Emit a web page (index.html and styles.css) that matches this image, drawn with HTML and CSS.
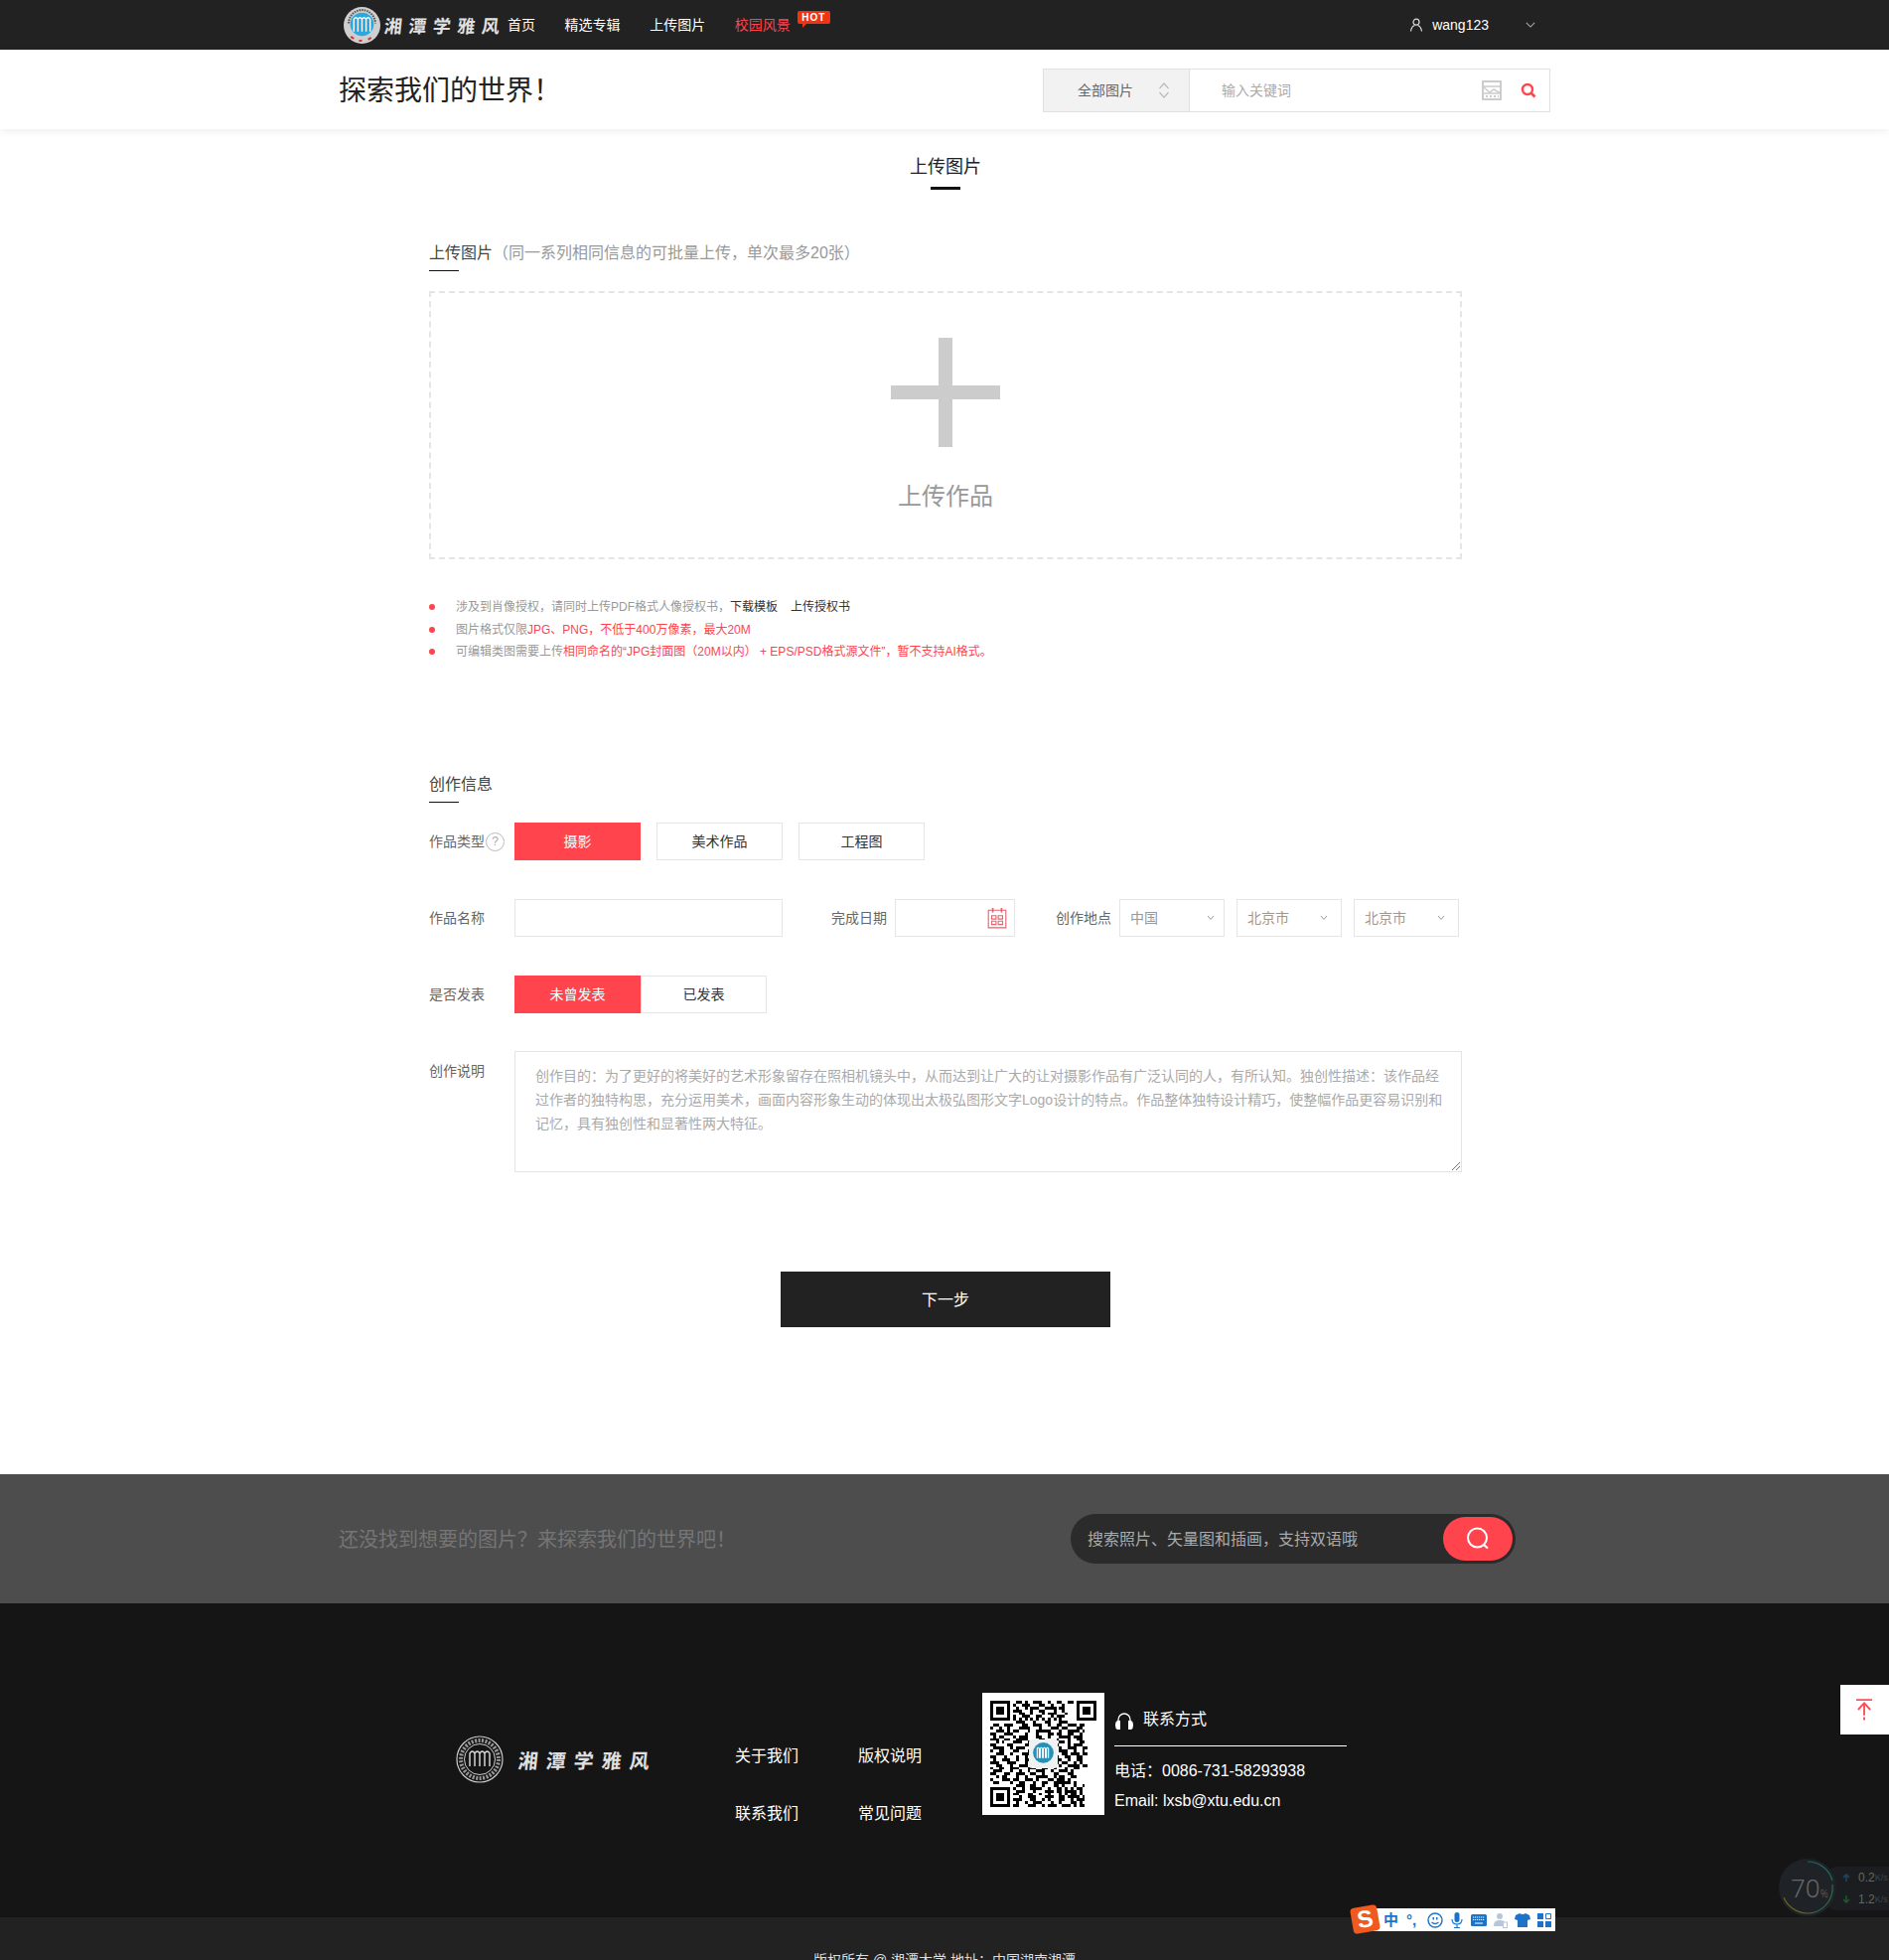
FILE: index.html
```html
<!DOCTYPE html>
<html lang="zh-CN">
<head>
<meta charset="utf-8">
<title>上传图片</title>
<link rel="stylesheet" href="styles.css">
</head>
<body>
<nav class="topbar">
  <div class="wrap topbar-in">
    <a class="brand">
      <svg class="badge" viewBox="0 0 36 36">
        <circle cx="18" cy="18" r="18" fill="#cfcfcf"/>
        <circle cx="18" cy="17" r="11.500" fill="#29a9e0"/>
        <path d="M10 24V12q2-3 4 0v12M14 24V12q2-3 4 0v12M18 24V12q2-3 4 0v12M22 24V12q2-3 4 0v12" fill="none" stroke="#fff" stroke-width="1.300"/>
        <path d="M7 29l3 2M15 33h3M24 32l3-2" stroke="#d33" stroke-width="2"/>
        <path d="M5 16a13 13 0 0 1 26 0" fill="none" stroke="#555" stroke-width="2" stroke-dasharray="1.500 1"/>
      </svg>
      <span class="brand-text">湘潭学雅风</span>
    </a>
    <ul class="menu">
      <li>首页</li>
      <li>精选专辑</li>
      <li>上传图片</li>
      <li class="menu-hot">校园风景
        <span class="hot">HOT</span>
      </li>
    </ul>
    <div class="user">
      <svg class="user-ico" viewBox="0 0 14 14"><circle cx="7" cy="4.200" r="3" fill="none" stroke="#ddd" stroke-width="1.200"/><path d="M1.500 13.500C2 10 4 8 5.500 7.500M12.500 13.500C12 10 10 8 8.500 7.500" fill="none" stroke="#ddd" stroke-width="1.200"/></svg>
      <span>wang123</span>
      <svg class="user-caret" viewBox="0 0 12 7"><path d="M1 1l5 5 5-5" fill="none" stroke="#aaa" stroke-width="1.300"/></svg>
    </div>
  </div>
</nav>

<header class="head">
  <div class="wrap head-in">
    <h1 class="slogan">探索我们的世界！</h1>
    <div class="search">
      <div class="search-type">
        <span class="lift">全部图片</span>
        <svg class="updown" viewBox="0 0 12 18"><path d="M1.500 7l4.500-5 4.500 5M1.500 11l4.500 5 4.500-5" fill="none" stroke="#bbb" stroke-width="1.200"/></svg>
      </div>
      <div class="search-input">
        <span class="ph lift">输入关键词</span>
        <svg class="pic-ico" viewBox="0 0 20 20"><path d="M1 1h18v18H1z" fill="none" stroke="#ccc" stroke-width="2"/><path d="M1 6h18M1 6l7 6 4-3 7 4M1 13h18" fill="none" stroke="#ccc" stroke-width="1.500"/><path d="M4 16h2m2 0h2m2 0h2m2 0h1" stroke="#ccc" stroke-width="2"/></svg>
        <svg class="find-ico" viewBox="0 0 16 16"><circle cx="7" cy="7" r="5" fill="none" stroke="#ff444d" stroke-width="2.400"/><path d="M10.500 10.500l4 4" stroke="#ff444d" stroke-width="2.600"/></svg>
      </div>
    </div>
  </div>
</header>

<main class="main">
  <div class="tab">上传图片</div>

  <section class="form">
    <h2 class="sec-title"><span class="sec-name">上传图片</span><span class="sec-note">（同一系列相同信息的可批量上传，单次最多20张）</span></h2>
    <div class="drop">
      <div class="plus"></div>
      <div class="drop-text">上传作品</div>
    </div>
    <ul class="notes">
      <li>涉及到肖像授权，请同时上传PDF格式人像授权书，<span class="dark">下载模板</span><span class="dark gap">上传授权书</span></li>
      <li>图片格式仅限<span class="red">JPG、PNG，不低于400万像素，最大20M</span></li>
      <li>可编辑类图需要上传<span class="red">相同命名的“JPG封面图（20M以内） + EPS/PSD格式源文件”，暂不支持AI格式。</span></li>
    </ul>

    <h2 class="sec-title sec-two"><span class="sec-name">创作信息</span></h2>

    <div class="row row-first">
      <label class="lbl lbl-help">作品类型<span class="help">?</span></label>
      <div class="opts">
        <span class="opt on">摄影</span>
        <span class="opt">美术作品</span>
        <span class="opt">工程图</span>
      </div>
    </div>

    <div class="row">
      <label class="lbl">作品名称</label>
      <div class="field f-name"></div>
      <label class="lbl2 lbl-date">完成日期</label>
      <div class="field f-date">
        <svg class="cal" viewBox="0 0 18 20"><path d="M1 3h16v16H1z" fill="none" stroke="#e8606c" stroke-width="1"/><path d="M5 1v4M13 1v4" stroke="#e8606c" stroke-width="1.500"/><path d="M4 8h4v3H4zM10 8h4v3h-4zM4 13h4v3H4zM10 13h4v3h-4z" fill="none" stroke="#e8606c" stroke-width="1"/></svg>
      </div>
      <label class="lbl2 lbl-place">创作地点</label>
      <div class="sel sel-first"><span class="lift">中国</span><svg class="sel-car" viewBox="0 0 8 6"><path d="M1 1l3 3.500L7 1" fill="none" stroke="#999" stroke-width="1"/></svg></div>
      <div class="sel"><span class="lift">北京市</span><svg class="sel-car" viewBox="0 0 8 6"><path d="M1 1l3 3.500L7 1" fill="none" stroke="#999" stroke-width="1"/></svg></div>
      <div class="sel"><span class="lift">北京市</span><svg class="sel-car" viewBox="0 0 8 6"><path d="M1 1l3 3.500L7 1" fill="none" stroke="#999" stroke-width="1"/></svg></div>
    </div>

    <div class="row">
      <label class="lbl">是否发表</label>
      <div class="pair">
        <span class="opt on">未曾发表</span>
        <span class="opt">已发表</span>
      </div>
    </div>

    <div class="row row-area">
      <label class="lbl lbl-area">创作说明</label>
      <div class="area">创作目的：为了更好的将美好的艺术形象留存在照相机镜头中，从而达到让广大的让对摄影作品有广泛认同的人，有所认知。独创性描述：该作品经过作者的独特构思，充分运用美术，画面内容形象生动的体现出太极弘图形文字Logo设计的特点。作品整体独特设计精巧，使整幅作品更容易识别和记忆，具有独创性和显著性两大特征。
        <svg class="grip" viewBox="0 0 9 9"><path d="M1 9l8-8M5 9l4-4" stroke="#777" stroke-width="1"/></svg>
      </div>
    </div>

    <div class="next-line"><span class="next">下一步</span></div>
  </section>
</main>

<section class="band">
  <div class="wrap band-in">
    <div class="band-text">还没找到想要的图片？来探索我们的世界吧！</div>
    <div class="pill">
      <span class="pill-ph">搜索照片、矢量图和插画，支持双语哦</span>
      <span class="pill-btn"><svg viewBox="0 0 24 24"><circle cx="11.500" cy="11" r="9.500" fill="none" stroke="#fff" stroke-width="2"/><path d="M18 18l4 3.500" stroke="#fff" stroke-width="2"/></svg></span>
    </div>
  </div>
</section>

<footer class="foot">
  <div class="wrap foot-in">
    <div class="foot-logo">
      <svg class="foot-badge" viewBox="0 0 48 48">
        <circle cx="24" cy="24" r="23" fill="none" stroke="#ccc" stroke-width="1.200"/>
        <circle cx="24" cy="24" r="15.500" fill="none" stroke="#ccc" stroke-width="1"/>
        <circle cx="24" cy="24" r="19" fill="none" stroke="#999" stroke-width="4" stroke-dasharray="2 1.500"/>
        <path d="M14 31V18q2.500-4 5 0v13M19 31V18q2.500-4 5 0v13M24 31V18q2.500-4 5 0v13M29 31V18q2.500-4 5 0v13" fill="none" stroke="#ddd" stroke-width="1.400"/>
      </svg>
      <span class="foot-name">湘潭学雅风</span>
    </div>
    <ul class="foot-links">
      <li>关于我们</li>
      <li>版权说明</li>
      <li>联系我们</li>
      <li>常见问题</li>
    </ul>
    <div class="qr">
      <svg viewBox="0 0 37 37" shape-rendering="crispEdges">
        <path fill="#000" fill-rule="evenodd" d="M0 0h7v7H0zM1 1v5h5V1zM2 2h3v3H2zM30 0h7v7h-7zM31 1v5h5V1zM32 2h3v3h-3zM0 30h7v7H0zM1 31v5h5v-5zM2 32h3v3H2z"/>
        <path fill="none" stroke="#000" stroke-width="1" d="M9 .5h2m1 0h1m2 0h3m2 0h1m2 0h2m2 0h2
M8 1.500h1m2 0h3m3 0h2m2 0h1m3 0h1
M9 2.500h1m2 0h1m1 0h3m2 0h4m1 0h2
M8 3.500h3m3 0h1m2 0h2m3 0h1m2 0h1
M10 4.500h2m2 0h1m3 0h1m1 0h3m3 0h1
M8 5.500h1m2 0h3m2 0h2m3 0h1m1 0h3
M8 6.500h1m1 0h1m1 0h1m1 0h1m1 0h1m1 0h1m1 0h1m1 0h1m1 0h1
M9 7.500h3m3 0h1m3 0h2m3 0h3
M1 8.500h2m2 0h3m3 0h2m2 0h3m2 0h1m2 0h2m2 0h3m1 0h2
M0 9.500h1m2 0h1m2 0h1m3 0h4m3 0h1m3 0h3m1 0h2m3 0h2
M2 10.500h3m1 0h1m1 0h2m3 0h1m2 0h5m3 0h1m2 0h4m1 0h1
M0 11.500h2m3 0h3m4 0h1m3 0h1m3 0h2m1 0h2m2 0h2m2 0h1
M1 12.500h1m1 0h2m3 0h1m1 0h3m3 0h2m2 0h1m3 0h4m1 0h3
M0 13.500h3m2 0h2m2 0h4m4 0h2m4 0h1m3 0h1m2 0h2
M2 14.500h1m1 0h1m3 0h3m2 0h1m10 0h2m1 0h1m3 0h2
M0 15.500h2m4 0h2m4 0h2m9 0h1m3 0h1m1 0h3
M1 16.500h4m2 0h1m1 0h3m2 0h1m9 0h1m2 0h3m2 0h2
M0 17.500h1m2 0h2m3 0h2m3 0h1m10 0h3m2 0h1m2 0h1
M2 18.500h3m2 0h1m3 0h3m11 0h2m1 0h3m1 0h2
M0 19.500h2m3 0h1m3 0h1m2 0h1m10 0h1m2 0h2m2 0h2
M1 20.500h1m2 0h3m2 0h1m2 0h2m9 0h2m2 0h1m2 0h2
M0 21.500h3m3 0h3m3 0h1m10 0h1m1 0h2m2 0h1m1 0h1
M2 22.500h2m3 0h1m2 0h3m2 0h1m8 0h1m2 0h4m1 0h2
M0 23.500h1m2 0h2m2 0h3m3 0h3m2 0h2m2 0h1m3 0h1m2 0h2
M1 24.500h3m3 0h1m2 0h1m2 0h1m2 0h3m2 0h1m2 0h3m1 0h1
M0 25.500h2m3 0h2m2 0h3m2 0h2m2 0h1m3 0h2m3 0h2
M2 26.500h1m1 0h2m3 0h1m2 0h1m3 0h4m2 0h1m1 0h2m2 0h2
M0 27.500h1m3 0h3m1 0h2m2 0h3m1 0h1m3 0h2m1 0h3m1 0h1
M1 28.500h2m4 0h1m2 0h2m3 0h1m2 0h2m2 0h6m1 0h1
M9 29.500h3m2 0h2m2 0h1m3 0h2m1 0h1m3 0h1m2 0h1
M8 30.500h1m2 0h1m2 0h4m2 0h1m2 0h2m1 0h1m1 0h1m1 0h2
M9 31.500h3m3 0h1m3 0h3m1 0h2m1 0h4m1 0h1
M8 32.500h2m3 0h2m2 0h1m2 0h1m3 0h1m1 0h1m1 0h2m1 0h1
M10 33.500h1m2 0h3m3 0h3m2 0h2m1 0h4m1 0h1
M8 34.500h3m3 0h2m2 0h1m1 0h1m3 0h2m2 0h1m1 0h3
M9 35.500h1m2 0h1m2 0h3m3 0h1m2 0h1m3 0h2m1 0h1
M8 36.500h2m3 0h3m2 0h1m1 0h3m2 0h3m1 0h1m1 0h2"/>
      </svg>
      <svg class="qr-logo" viewBox="0 0 28 28">
        <rect width="28" height="28" rx="3" fill="#eef2f2"/>
        <circle cx="14" cy="13" r="10" fill="#2790b8"/>
        <path d="M8 18V9q1-2 2 0v9M11 18V9q1-2 2 0v9M14 18V9q1-2 2 0v9M17 18V9q1-2 2 0v9" fill="none" stroke="#fff" stroke-width="1"/>
      </svg>
    </div>
    <div class="contact">
      <div class="contact-title">
        <svg class="phones" viewBox="0 0 20 18"><path d="M4 11V8a6 6 0 0 1 12 0v3" fill="none" stroke="#fff" stroke-width="1.300"/><path d="M1 13q0-3 2-4h3v9H3q-2-1-2-4zM19 13q0-3-2-4h-3v9h3q2-1 2-4z" fill="#fff"/></svg>
        <span class="lift">联系方式</span>
      </div>
      <div class="contact-line">电话：0086-731-58293938</div>
      <div class="contact-line">Email: lxsb@xtu.edu.cn</div>
    </div>
  </div>
</footer>
<div class="copy">版权所有 @ 湘潭大学&nbsp;地址：中国湖南湘潭</div>

<a class="totop" aria-label="回到顶部"><svg viewBox="0 0 18 24"><path d="M0 1.500h17M2 12l6.500-7 6.500 7M8.500 6v12M8.500 20v3" fill="none" stroke="#ff5058" stroke-width="2"/></svg></a>

<div class="speed">
  <div class="speed-pill">
    <div class="speed-row"><svg viewBox="0 0 8 8"><path d="M4 8V2M1 4l3-3 3 3" fill="none" stroke="#1d4a63" stroke-width="1.500"/></svg><b>0.2</b><i>K/s</i></div>
    <div class="speed-row"><svg viewBox="0 0 8 8"><path d="M4 0v6M1 4l3 3 3-3" fill="none" stroke="#1f5a2a" stroke-width="1.500"/></svg><b>1.2</b><i>K/s</i></div>
  </div>
  <div class="speed-dial">
    <svg viewBox="0 0 58 58"><circle cx="29" cy="29" r="29" fill="#1f2226"/><path d="M29 3a26 26 0 0 1 25 19" fill="none" stroke="#1e6a62" stroke-width="1.200"/><path d="M54 26a26 26 0 0 1-18 28" fill="none" stroke="#2f6a4a" stroke-width="1.200"/><path d="M36 54A26 26 0 0 1 5 39" fill="none" stroke="#6b6322" stroke-width="1.200"/></svg>
    <span class="dial-num">70<small>%</small></span>
  </div>
</div>

<div class="ime">
  <span class="ime-s">S</span>
  <span class="ime-t">中</span>
  <span class="ime-p">°,</span>
  <svg class="ime-i" viewBox="0 0 16 16"><circle cx="8" cy="8" r="7" fill="none" stroke="#1c73c8" stroke-width="1.400"/><path d="M4.500 10q3.500 3 7 0" fill="none" stroke="#1c73c8" stroke-width="1.300"/><path d="M5.500 5h1.500v2.500H5.500zM9 5h1.500v2.500H9z" fill="#1c73c8"/></svg>
  <svg class="ime-i" viewBox="0 0 16 16"><rect x="5.500" y="0" width="5" height="10" rx="2.500" fill="#1c73c8"/><path d="M3 7q0 5 5 5t5-5M8 12v3M5 15.500h6" fill="none" stroke="#1c73c8" stroke-width="1.200"/></svg>
  <svg class="ime-i" viewBox="0 0 16 16"><rect y="2" width="16" height="12" rx="1.500" fill="#1c73c8"/><path d="M2 5h12M2 7.500h12" stroke="#fff" stroke-width="1" stroke-dasharray="1.200 .8"/><path d="M4 11h8" stroke="#fff"/></svg>
  <svg class="ime-i" viewBox="0 0 16 16"><circle cx="7" cy="4" r="3" fill="#b6c6dc"/><path d="M1 13q0-5 6-5t5 3v3H1z" fill="#b6c6dc"/><rect x="10.500" y="10" width="4" height="5.500" fill="#fff" stroke="#b6c6dc"/></svg>
  <svg class="ime-i" viewBox="0 0 16 16"><path d="M5 1L1 3 0 7l3 1v7h10V8l3-1-1-4-4-2q-3 2-6 0z" fill="#1c73c8"/></svg>
  <svg class="ime-i" viewBox="0 0 16 16"><path d="M1 1h6v6H1zM1 9h6v6H1zM9 9h6v6H9z" fill="#1c73c8"/><path d="M9.500 1.500h5v5h-5z" fill="none" stroke="#1c73c8"/></svg>
</div>
</body>
</html>
```

FILE: styles.css
```css
* { box-sizing: border-box; }
html, body { margin: 0; padding: 0; height: 1973px; overflow: hidden; }
body {
  position: relative;
  font-family: "Liberation Sans", "Noto Sans CJK SC", sans-serif;
  font-size: 14px;
  color: #333;
  background: #fff;
}
ul { list-style: none; margin: 0; padding: 0; }
h1, h2 { margin: 0; font-weight: 400; }
svg { display: block; }
.wrap { width: 1220px; margin: 0 auto; }
.lift { padding-bottom: 2px; }

/* top bar */
.topbar { height: 50px; background: #222; color: #fff; }
.topbar-in { display: flex; align-items: center; height: 50px; padding-left: 5px; }
.brand { display: flex; align-items: center; width: 165px; }
.badge { width: 37px; height: 37px; flex: none; }
.brand-text {
  margin-left: 4px;
  font-size: 18px;
  font-weight: 700;
  letter-spacing: 6.500px;
  white-space: nowrap;
  color: #e0e0e0;
  transform: skewX(-6deg);
}
.menu { display: flex; gap: 29.600px; line-height: 50px; }
.menu-hot { position: relative; color: #ff444d; }
.hot {
  position: absolute;
  left: 63px;
  top: 11px;
  width: 33px;
  height: 13px;
  background: #f03412;
  border-radius: 2px;
  color: #fff;
  font-size: 10px;
  font-weight: 700;
  line-height: 13px;
  letter-spacing: 1px;
  text-align: center;
}
.hot::after {
  content: "";
  position: absolute;
  left: 5px;
  top: 13px;
  border: 2px solid transparent;
  border-top-color: #f03412;
  border-left-color: #f03412;
}
.user { display: flex; align-items: center; margin-left: auto; margin-right: 15px; }
.user-ico { width: 14px; height: 14px; margin-right: 9px; }
.user-caret { width: 10px; height: 6px; margin-left: 37px; }

/* header */
.head { position: relative; height: 80px; background: #fff; box-shadow: 0 2px 8px rgba(0,0,0,.07); }
.head-in { display: flex; align-items: center; justify-content: space-between; height: 80px; padding-top: 2px; }
.slogan { font-size: 28px; line-height: 40px; color: #222; margin-top: 1px; }
.search { display: flex; width: 511px; height: 44px; border: 1px solid #e0e0e0; }
.search-type {
  display: flex;
  align-items: center;
  width: 147px;
  padding-left: 34px;
  background: #f2f2f2;
  border-right: 1px solid #e0e0e0;
  color: #666;
}
.updown { width: 12px; height: 18px; margin-left: 25px; }
.search-input { flex: 1; display: flex; align-items: center; padding-left: 32px; }
.ph { color: #aaa; }
.pic-ico { width: 20px; height: 20px; margin-left: auto; }
.find-ico { width: 16px; height: 16px; margin: 0 13px 0 19px; }

/* main */
.main { width: 1040px; margin: 0 0 0 432px; }
.tab { position: relative; margin: 25px auto 0; width: 72px; text-align: center; font-size: 18px; line-height: 26px; color: #222; white-space: nowrap; height: 36px; }
.tab::after { content: ""; position: absolute; left: 21px; bottom: 0; width: 30px; height: 3px; background: #111; }
.form { padding-top: 51px; }
.sec-title { position: relative; font-size: 16px; line-height: 26px; height: 31px; }
.sec-title::after { content: ""; position: absolute; left: 0; bottom: 0; width: 30px; height: 1px; background: #111; }
.sec-name { color: #444; }
.sec-note { color: #999; }
.drop {
  display: flex;
  flex-direction: column;
  align-items: center;
  height: 270px;
  margin-top: 20px;
  width: 1040px;
  border: 2px dashed #e5e5e5;
  padding-top: 45px;
}
.plus { position: relative; width: 110px; height: 110px; background: linear-gradient(#ccc,#ccc) center/100% 14px no-repeat, linear-gradient(#ccc,#ccc) center/14px 100% no-repeat; }
.drop-text { margin-top: 32px; font-size: 24px; line-height: 36px; color: #999; }
.notes { margin-top: 37px; font-size: 12px; line-height: 22.500px; color: #999; }
.notes li { position: relative; padding-left: 27px; }
.notes li::before { content: ""; position: absolute; left: 0; top: 8px; width: 6px; height: 6px; border-radius: 50%; background: #ff444d; }
.dark { color: #333; }
.gap { margin-left: 13px; }
.red { color: #ff444d; }
.sec-two { margin-top: 109.500px; }

.row { display: flex; align-items: center; height: 38px; margin-top: 39px; }
.row-first { margin-top: 20px; }
.lbl { width: 86px; flex: none; padding-bottom: 2px; color: #666; white-space: nowrap; }
.lbl-help { display: flex; align-items: center; }
.help {
  width: 19px;
  height: 19px;
  margin: 2px 0 0 1px;
  border: 1px solid #bbb;
  border-radius: 50%;
  color: #aaa;
  font-size: 12px;
  line-height: 17px;
  text-align: center;
}
.opts { display: flex; gap: 16px; }
.pair { display: flex; }
.opt {
  display: block;
  width: 127px;
  height: 38px;
  border: 1px solid #e5e5e5;
  line-height: 36px;
  text-align: center;
  color: #333;
}
.opt.on { background: #ff444d; border-color: #ff444d; color: #fff; }
.field { height: 38px; border: 1px solid #e5e5e5; flex: none; }
.f-name { width: 270px; }
.lbl2 { flex: none; padding-bottom: 2px; color: #666; white-space: nowrap; }
.lbl-date { margin-left: 49px; }
.f-date { display: flex; align-items: center; justify-content: flex-end; width: 121px; margin-left: 8px; padding-right: 7px; }
.cal { width: 20px; height: 22px; }
.lbl-place { margin-left: 41px; }
.sel {
  display: flex;
  align-items: center;
  justify-content: space-between;
  width: 106px;
  height: 38px;
  margin-left: 12px;
  padding: 0 13px 0 10px;
  border: 1px solid #e5e5e5;
  color: #999;
  flex: none;
}
.lbl-place + .sel { margin-left: 8px; }
.sel-first { padding-right: 9px; }
.sel-car { width: 8px; height: 6px; }
.row-area { align-items: flex-start; height: 122px; margin-top: 38px; }
.lbl-area { margin-top: 9px; }
.area {
  position: relative;
  width: 954px;
  height: 122px;
  flex: none;
  padding: 12px 14px 0 20px;
  border: 1px solid #e5e5e5;
  color: #aaa;
  line-height: 24px;
}
.grip { position: absolute; right: 1px; bottom: 1px; width: 9px; height: 9px; }
.next-line { display: flex; justify-content: center; margin-top: 100px; }
.next { width: 332px; height: 56px; background: #222; color: #fff; font-size: 16px; line-height: 58px; text-align: center; }

/* band */
.band { margin-top: 148px; height: 130px; background: #4d4d4d; }
.band-in { display: flex; align-items: center; justify-content: space-between; height: 130px; padding-right: 35px; }
.band-text { padding-bottom: 2px; font-size: 20px; color: #757575; }
.pill { display: flex; align-items: center; justify-content: space-between; width: 448px; height: 50px; padding: 0 3px 0 17px; border-radius: 25px; background: #2b2b2b; }
.pill-ph { padding-bottom: 2px; font-size: 16px; color: #aaa; }
.pill-btn { display: flex; align-items: center; justify-content: center; width: 70px; height: 44px; border-radius: 22px; background: #ff444d; }
.pill-btn svg { width: 24px; height: 24px; }

/* footer */
.foot { height: 316px; background: #151515; color: #fff; }
.foot-in { display: flex; align-items: flex-start; padding: 90px 0 0 118px; }
.foot-logo { display: flex; align-items: center; width: 281px; margin-top: 43px; }
.foot-badge { width: 48px; height: 48px; flex: none; }
.foot-name { margin-left: 15px; font-size: 20px; font-weight: 700; letter-spacing: 8px; white-space: nowrap; color: #e0e0e0; transform: skewX(-6deg); }
.foot-links { display: grid; grid-template-columns: 124px 125px; grid-auto-rows: 58px; margin-top: 52px; font-size: 16px; line-height: 24px; }
.qr { position: relative; width: 123px; height: 123px; padding: 8px; background: #fff; flex: none; }
.qr svg { width: 107px; height: 107px; }
.qr .qr-logo { position: absolute; left: 47px; top: 47px; width: 29px; height: 29px; }
.contact { width: 234px; margin: 16px 0 0 10px; font-size: 16px; line-height: 30px; }
.contact-title { display: flex; align-items: center; height: 38px; margin-bottom: 10px; padding-bottom: 14px; border-bottom: 1px solid #fff; line-height: 24px; }
.phones { width: 20px; height: 18px; margin-right: 9px; }

.copy { height: 60px; padding-top: 32px; background: #222; color: #ddd; line-height: 22px; text-align: center; }

/* overlays */
.totop { position: absolute; right: 0; top: 1696px; display: flex; align-items: center; justify-content: center; width: 49px; height: 50px; background: #fff; }
.totop svg { width: 17px; height: 24px; }
.speed { position: absolute; right: 0; top: 1871px; width: 111px; height: 58px; }
.speed-dial { position: absolute; left: 0; top: 0; width: 58px; height: 58px; }
.speed-dial svg { width: 58px; height: 58px; }
.dial-num { position: absolute; left: 12px; top: 15px; font-size: 26px; line-height: 28px; color: #666; font-family: "Noto Sans", sans-serif; font-weight: 300; }
.dial-num small { font-size: 10px; }
.speed-pill { position: absolute; left: 48px; top: 8px; width: 63px; height: 44px; padding-left: 16px; background: #1b1d20; border-radius: 10px 0 0 10px; }
.speed-row { display: flex; align-items: center; height: 22px; color: #666; white-space: nowrap; }
.speed-row svg { width: 8px; height: 8px; margin-right: 8px; flex: none; }
.speed-row b { font-weight: 400; font-size: 12px; }
.speed-row i { font-style: normal; font-size: 9px; color: #444; }
.ime { position: absolute; left: 1372px; top: 1921px; display: flex; align-items: center; gap: 6px; width: 194px; height: 23px; padding-left: 21px; background: #fff; }
.ime-s { position: absolute; left: -11px; top: -2px; width: 27px; height: 26px; border-radius: 4px; background: #f05a1e; color: #fff; font-size: 24px; font-weight: 700; line-height: 26px; text-align: center; transform: rotate(-10deg); }
.ime-t { width: 17px; color: #1c73c8; font-size: 15px; font-weight: 700; line-height: 23px; }
.ime-p { width: 15px; color: #1c73c8; font-size: 15px; font-weight: 700; line-height: 18px; }
.ime-i { width: 16px; height: 16px; flex: none; }
```
